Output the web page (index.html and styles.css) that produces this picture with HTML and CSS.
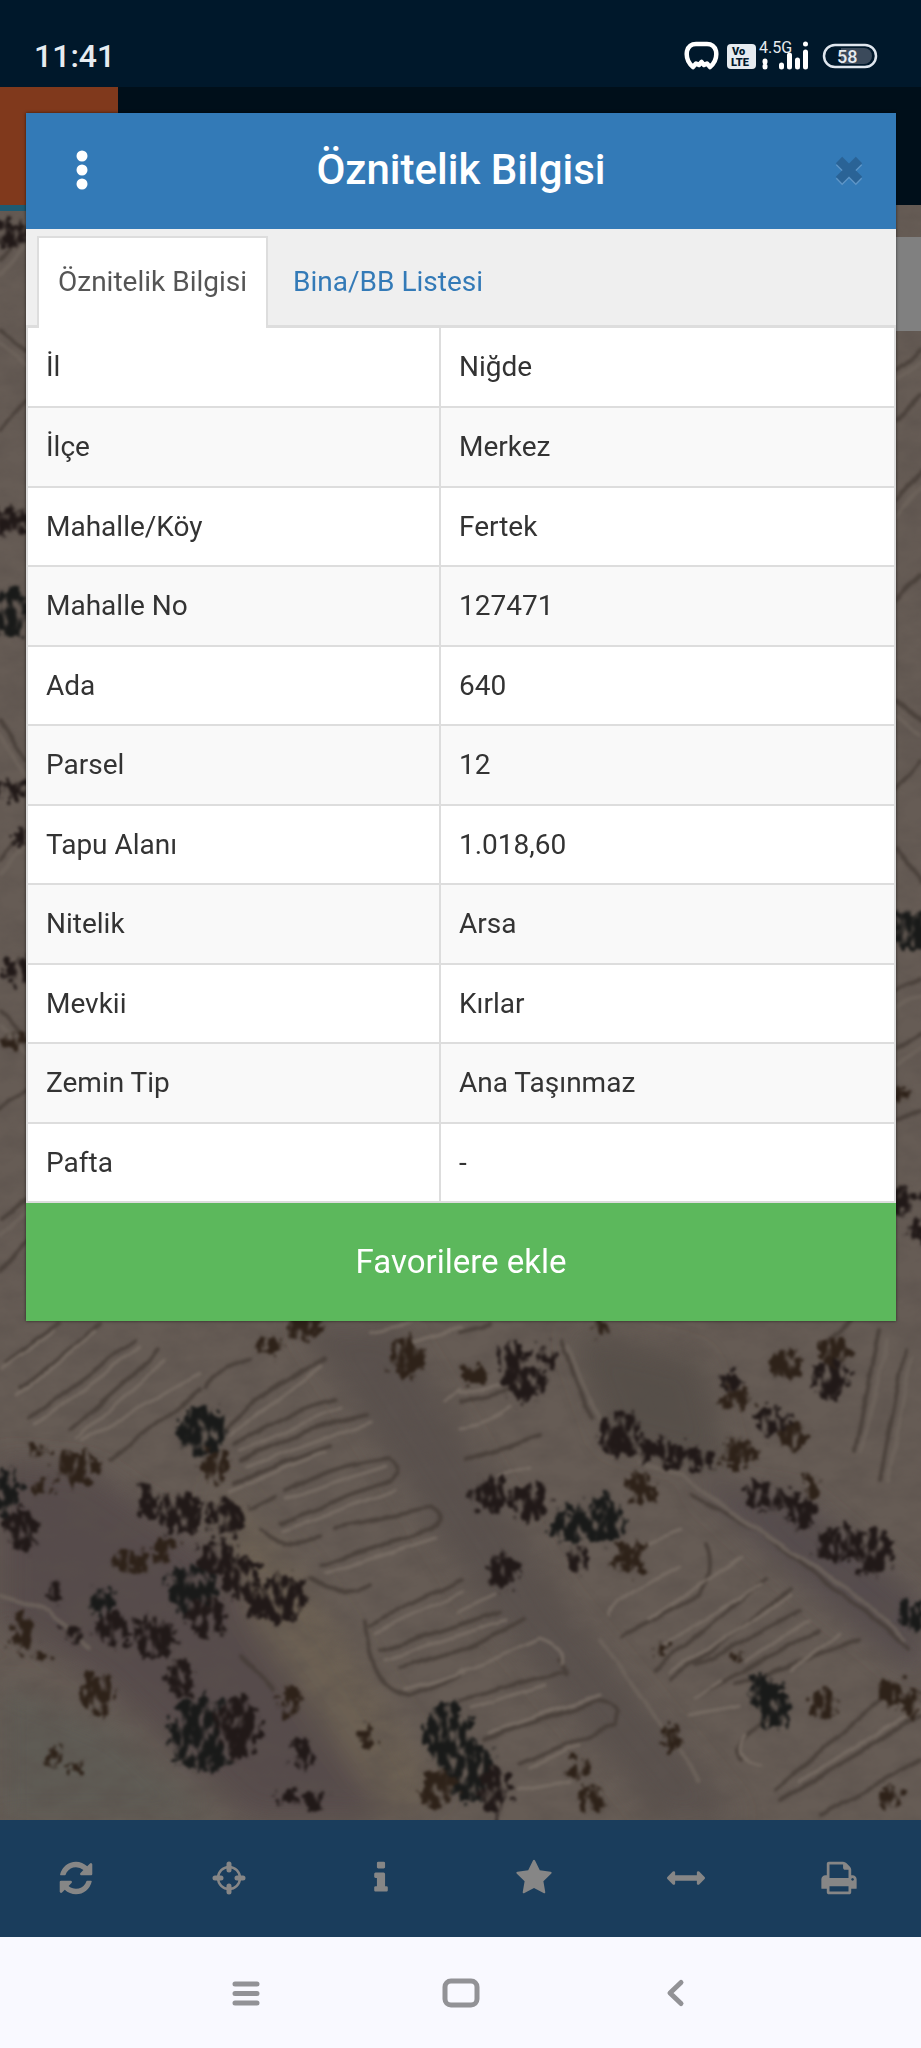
FILE: index.html
```html
<!DOCTYPE html>
<html lang="tr">
<head>
    <meta charset="UTF-8">
    <meta name="viewport" content="width=device-width, initial-scale=1.0">
    <title>Öznitelik Bilgisi</title>
    <link rel="stylesheet" href="styles.css">
</head>
<body>
    <div class="screen">
        <div class="status-bar">
            <span class="clock">11:41</span>
            <svg class="status-icons" viewBox="0 0 200 40" width="200" height="40">
                <!-- headset -->
                <path d="M10 31C4 26 3 21 4 15Q6 8 13 8H24Q31 8 33 15C34 21 33 26 27 31L24 27.500L21 29L18.500 26L16 29L13 27.500Z" fill="none" stroke="#fff" stroke-width="4.500" stroke-linejoin="round"/>
                <!-- volte -->
                <rect x="44" y="8" width="29" height="25" rx="4" fill="#e6ebf0"/>
                <text x="49" y="19" class="volte-text">Vo</text>
                <text x="48" y="30" class="volte-text">LTE</text>
                <!-- signal -->
                <text x="76" y="17" class="net-text">4.5G</text>
                <path d="M82 25v1M82 30v1" class="bar"/>
                <path d="M98.500 29v2M106.500 19v12M114.500 24v7M122.500 16v15M122.500 8v.1" class="bar"/>
                <!-- battery -->
                <path d="M158 12h23a8 8 0 0 1 0 16h-23z" fill="#3b4a5b"/>
                <rect x="141" y="9" width="52" height="22" rx="11" fill="none" stroke="#dfe6ee" stroke-width="2.500"/>
                <text x="154" y="27" class="battery-text">58</text>
            </svg>
        </div>

        <div class="app-header">
            <div class="logo"></div>
        </div>

        <main class="map">
            <svg class="map-image" viewBox="0 205 921 1615" preserveAspectRatio="xMidYMax slice">
                <defs>
                    <filter id="ground" x="0" y="0" width="100%" height="100%">
                        <feTurbulence type="fractalNoise" baseFrequency="0.03 0.05" numOctaves="4" seed="4"/>
                        <feColorMatrix values="0 0 0 0 0.1  0 0 0 0 0.08  0 0 0 0 0.07  1.6 0 0 0 -0.55"/>
                    </filter>
                    <filter id="rough" x="-5%" y="-5%" width="110%" height="110%" color-interpolation-filters="sRGB">
                        <feTurbulence type="fractalNoise" baseFrequency="0.1" numOctaves="3" seed="8" result="n"/>
                        <feDisplacementMap in="SourceGraphic" in2="n" scale="26" xChannelSelector="R" yChannelSelector="G" result="d"/>
                        <!-- holes in the foliage -->
                        <feTurbulence type="fractalNoise" baseFrequency="0.13 0.07" numOctaves="2" seed="3"/>
                        <feColorMatrix values="0 0 0 0 0  0 0 0 0 0  0 0 0 0 0  5 0 0 0 -1.5" result="holes"/>
                        <feComposite in="d" in2="holes" operator="in"/>
                        <feGaussianBlur stdDeviation="1.8"/>
                    </filter>
                    <filter id="wobble" x="-5%" y="-5%" width="110%" height="110%" color-interpolation-filters="sRGB">
                        <feTurbulence type="fractalNoise" baseFrequency="0.03" numOctaves="2" seed="2" result="n"/>
                        <feDisplacementMap in="SourceGraphic" in2="n" scale="8" xChannelSelector="R" yChannelSelector="G"/>
                        <feGaussianBlur stdDeviation="1.5"/>
                    </filter>
                    <filter id="soft" x="-20%" y="-20%" width="140%" height="140%">
                        <feGaussianBlur stdDeviation="14"/>
                    </filter>
                </defs>

                <rect y="205" width="921" height="1615" fill="#665c55"/>
                <g filter="url(#soft)">
                    <path d="M0 1460L90 1470 250 1580 420 1820H250L100 1680 0 1620z" fill="#564c4c"/>
                    <path d="M215 1480L300 1570 440 1790 390 1820 250 1620z" fill="#6c6053"/>
                    <path d="M0 1680L120 1730 220 1820H0z" fill="#5f5b54"/>
                    <path d="M300 1320L400 1330 560 1600 740 1820H660L480 1600z" fill="#5a514d"/>
                    <path d="M570 1330L700 1360 730 1470 610 1440z" fill="#57504a"/>
                    <path d="M690 1480L800 1500 921 1600V1680L800 1580z" fill="#554b4d"/>
                </g>
                <rect y="205" width="921" height="1615" filter="url(#ground)" opacity=".6"/>

                <!-- furrows -->
                <g filter="url(#wobble)" fill="none" stroke-width="4" stroke-linecap="round" opacity=".8">
                    <g stroke="#453c36">
                        <path d="M5 1362L60 1322M22 1388L100 1325M30 1418L135 1340M70 1430L160 1350M110 1460L200 1390"/>
                        <path d="M205 1388Q215 1368 250 1358M225 1428Q270 1385 325 1358M235 1445Q280 1415 335 1400M240 1462Q300 1430 365 1415M235 1482L330 1446M285 1492Q330 1465 390 1458Q405 1470 390 1480L280 1522M250 1510L275 1497M335 1528L430 1508Q450 1518 430 1530L320 1566M262 1530Q290 1555 320 1535M370 1625L460 1580M310 1580Q340 1600 370 1585M380 1650L500 1612M365 1620Q370 1690 410 1696L460 1675M400 1668L460 1650"/>
                        <path d="M460 1332L490 1325M460 1402L515 1388M465 1460L540 1435M460 1650L525 1620M460 1700L560 1672M485 1738L600 1700Q625 1705 615 1725L520 1765M560 1660Q570 1680 563 1672"/>
                        <path d="M622 1636L700 1595Q715 1570 705 1545M655 1670L765 1580M670 1680L790 1590M695 1665L800 1610M700 1695L820 1630M735 1685L860 1640M740 1760Q730 1740 770 1720M780 1800L921 1715M820 1815L921 1760M775 1790L880 1700"/>
                        <path d="M880 1330L855 1450M905 1350L880 1480M850 1320L820 1350M240 1655L275 1690M562 1340L590 1420M690 1495L760 1530 850 1600 910 1650"/>
                        <path d="M0 260L26 230M0 330L26 350M0 430L26 400M0 720L26 760M0 860L26 830M0 1010L26 1040M0 1110L26 1090M0 1220L26 1200M0 1270L26 1240M896 370L921 350M896 420L921 395M896 500L921 470M896 600L921 575M896 700L921 720M896 790L921 760M896 850L921 880M896 990L921 980M896 1050L921 1035M896 1120L921 1110"/>
                    </g>
                    <g stroke="#7c7168" stroke-width="3">
                        <path d="M2 1368L55 1330M18 1396L95 1332M35 1425L140 1347M75 1440L165 1360M80 1442L110 1425 200 1375"/>
                        <path d="M230 1435L320 1366M240 1452L340 1408M245 1468L370 1422M230 1490L325 1452M285 1500L385 1466M282 1530L395 1490M325 1574L435 1538M375 1633L461 1592M385 1660L505 1620M405 1690L465 1672M370 1332L420 1322M400 1345L461 1328M445 1400L461 1390"/>
                        <path d="M460 1428Q490 1425 512 1408M460 1394L500 1384M460 1612L495 1595M460 1672L540 1638Q570 1650 562 1664M470 1708L545 1685M490 1732L600 1695M530 1768L580 1745M520 1790L570 1780M500 1475L530 1468"/>
                        <path d="M610 1615Q615 1600 640 1588L680 1565M648 1620L742 1558M665 1645L700 1622 760 1585M670 1672L790 1596M745 1663L810 1620M790 1670L840 1635M695 1698L720 1682M690 1715L740 1705M640 1545L682 1530M745 1735Q730 1760 760 1765M800 1780L921 1708"/>
                    </g>
                    <g stroke="#6f655d">
                        <path d="M887 1340L862 1450M912 1360L888 1480M568 1345L600 1425M640 1462L680 1475 715 1500 850 1590 905 1640M600 1640L700 1780M0 1595L50 1610 90 1650"/>
                        <path d="M0 275L26 245M0 345L26 365M0 735L26 775M0 875L26 845M0 1025L26 1055M0 1235L26 1212M896 380L921 362M896 515L921 485M896 715L921 735M896 1005L921 995M896 1065L921 1050"/>
                    </g>
                </g>

                <!-- trees and bushes -->
                <g filter="url(#rough)">
                    <g fill="#191a19">
                        <ellipse cx="202" cy="1430" rx="24" ry="26"/>
                        <ellipse cx="6" cy="1492" rx="12" ry="25"/>
                        <ellipse cx="192" cy="1592" rx="24" ry="27"/>
                        <ellipse cx="204" cy="1734" rx="36" ry="38"/>
                        <ellipse cx="448" cy="1735" rx="24" ry="32"/>
                        <ellipse cx="472" cy="1772" rx="24" ry="32"/>
                        <ellipse cx="575" cy="1525" rx="26" ry="18"/>
                        <ellipse cx="604" cy="1520" rx="22" ry="24"/>
                        <ellipse cx="770" cy="1702" rx="17" ry="31" transform="rotate(-30 770 1702)"/>
                        <ellipse cx="8" cy="612" rx="22" ry="24"/>
                        <ellipse cx="912" cy="930" rx="20" ry="20"/>
                        <ellipse cx="103" cy="1602" rx="12" ry="15"/>
                        <ellipse cx="914" cy="1616" rx="17" ry="15"/>
                    </g>
                    <g fill="#211918">
                        <ellipse cx="22" cy="1530" rx="16" ry="21"/>
                        <ellipse cx="148" cy="1503" rx="9" ry="18"/>
                        <ellipse cx="182" cy="1513" rx="24" ry="20"/>
                        <ellipse cx="226" cy="1518" rx="19" ry="19"/>
                        <ellipse cx="207" cy="1618" rx="19" ry="20"/>
                        <ellipse cx="218" cy="1558" rx="20" ry="16"/>
                        <ellipse cx="243" cy="1580" rx="18" ry="22"/>
                        <ellipse cx="257" cy="1606" rx="10" ry="13"/>
                        <ellipse cx="283" cy="1599" rx="23" ry="26"/>
                        <ellipse cx="112" cy="1628" rx="15" ry="16"/>
                        <ellipse cx="55" cy="1593" rx="9" ry="10"/>
                        <ellipse cx="73" cy="1634" rx="12" ry="10"/>
                        <ellipse cx="153" cy="1637" rx="23" ry="21"/>
                        <ellipse cx="181" cy="1678" rx="14" ry="19"/>
                        <ellipse cx="238" cy="1728" rx="22" ry="33"/>
                        <ellipse cx="302" cy="1752" rx="10" ry="18"/>
                        <ellipse cx="289" cy="1798" rx="11" ry="10"/>
                        <ellipse cx="315" cy="1803" rx="9" ry="11"/>
                        <ellipse cx="495" cy="1790" rx="15" ry="25"/>
                        <ellipse cx="512" cy="1360" rx="16" ry="19"/>
                        <ellipse cx="526" cy="1382" rx="19" ry="19"/>
                        <ellipse cx="548" cy="1355" rx="9" ry="16"/>
                        <ellipse cx="620" cy="1434" rx="20" ry="22"/>
                        <ellipse cx="672" cy="1455" rx="44" ry="13" transform="rotate(12 672 1455)"/>
                        <ellipse cx="831" cy="1380" rx="18" ry="19"/>
                        <ellipse cx="773" cy="1422" rx="16" ry="15"/>
                        <ellipse cx="490" cy="1494" rx="20" ry="18"/>
                        <ellipse cx="530" cy="1502" rx="19" ry="20"/>
                        <ellipse cx="578" cy="1560" rx="11" ry="13"/>
                        <ellipse cx="503" cy="1571" rx="16" ry="17"/>
                        <ellipse cx="770" cy="1497" rx="30" ry="13" transform="rotate(14 770 1497)"/>
                        <ellipse cx="803" cy="1515" rx="14" ry="15"/>
                        <ellipse cx="838" cy="1544" rx="25" ry="17"/>
                        <ellipse cx="870" cy="1551" rx="22" ry="24"/>
                        <ellipse cx="730" cy="1381" rx="10" ry="9"/>
                        <ellipse cx="10" cy="522" rx="18" ry="15"/>
                        <ellipse cx="12" cy="790" rx="16" ry="10"/>
                        <ellipse cx="24" cy="838" rx="10" ry="10"/>
                        <ellipse cx="18" cy="970" rx="13" ry="15"/>
                        <ellipse cx="10" cy="232" rx="16" ry="14"/>
                        <ellipse cx="903" cy="1200" rx="17" ry="12"/>
                        <ellipse cx="918" cy="1230" rx="13" ry="10"/>
                    </g>
                    <g fill="#2e2219">
                        <ellipse cx="215" cy="1467" rx="14" ry="18"/>
                        <ellipse cx="77" cy="1468" rx="24" ry="17"/>
                        <ellipse cx="38" cy="1450" rx="8" ry="8"/>
                        <ellipse cx="41" cy="1486" rx="8" ry="7"/>
                        <ellipse cx="163" cy="1548" rx="11" ry="14"/>
                        <ellipse cx="133" cy="1562" rx="20" ry="12"/>
                        <ellipse cx="22" cy="1633" rx="13" ry="19"/>
                        <ellipse cx="98" cy="1694" rx="18" ry="21"/>
                        <ellipse cx="44" cy="1657" rx="6" ry="6"/>
                        <ellipse cx="291" cy="1701" rx="11" ry="16"/>
                        <ellipse cx="368" cy="1738" rx="9" ry="12"/>
                        <ellipse cx="53" cy="1756" rx="11" ry="8"/>
                        <ellipse cx="75" cy="1768" rx="7" ry="6"/>
                        <ellipse cx="439" cy="1789" rx="18" ry="19"/>
                        <ellipse cx="406" cy="1357" rx="16" ry="21"/>
                        <ellipse cx="305" cy="1327" rx="20" ry="12"/>
                        <ellipse cx="270" cy="1345" rx="15" ry="9"/>
                        <ellipse cx="474" cy="1374" rx="12" ry="10"/>
                        <ellipse cx="600" cy="1327" rx="9" ry="8"/>
                        <ellipse cx="738" cy="1454" rx="20" ry="15"/>
                        <ellipse cx="736" cy="1399" rx="17" ry="10"/>
                        <ellipse cx="786" cy="1364" rx="16" ry="16"/>
                        <ellipse cx="834" cy="1350" rx="16" ry="13"/>
                        <ellipse cx="794" cy="1436" rx="14" ry="14"/>
                        <ellipse cx="631" cy="1559" rx="17" ry="16"/>
                        <ellipse cx="641" cy="1490" rx="16" ry="15"/>
                        <ellipse cx="812" cy="1486" rx="8" ry="14"/>
                        <ellipse cx="823" cy="1703" rx="14" ry="16"/>
                        <ellipse cx="892" cy="1694" rx="14" ry="14"/>
                        <ellipse cx="911" cy="1704" rx="10" ry="14"/>
                        <ellipse cx="673" cy="1738" rx="9" ry="13"/>
                        <ellipse cx="580" cy="1768" rx="11" ry="12"/>
                        <ellipse cx="593" cy="1798" rx="15" ry="14"/>
                        <ellipse cx="889" cy="1798" rx="11" ry="11"/>
                        <ellipse cx="660" cy="1648" rx="6" ry="7"/>
                        <ellipse cx="737" cy="1656" rx="5" ry="6"/>
                        <ellipse cx="902" cy="1095" rx="9" ry="8"/>
                        <ellipse cx="12" cy="1040" rx="13" ry="6"/>
                    </g>
                </g>
            </svg>
            <div class="logo-line"></div>
            <div class="map-tool"></div>
        </main>

        <nav class="toolbar">
            <button aria-label="Yenile"><svg viewBox="0 0 1792 1792"><path d="M1639 1056q0 5-1 7-64 268-268 434.500t-478 166.500q-146 0-282.500-55t-243.500-157l-129 129q-19 19-45 19t-45-19-19-45v-448q0-26 19-45t45-19h448q26 0 45 19t19 45-19 45l-137 137q71 66 161 102t187 36q134 0 250-65t186-179q11-17 53-117 8-23 30-23h192q13 0 22.500 9.500t9.500 22.500zm25-800v448q0 26-19 45t-45 19h-448q-26 0-45-19t-19-45 19-45l138-138q-148-137-349-137-134 0-250 65t-186 179q-11 17-53 117-8 23-30 23h-199q-13 0-22.500-9.500t-9.500-22.500v-7q65-268 270-434.500t480-166.500q146 0 284 55.500t245 156.500l130-129q19-19 45-19t45 19 19 45z"/></svg></button>
            <button aria-label="Konum"><svg viewBox="0 0 38 38"><circle cx="19" cy="19" r="11" fill="none" stroke="#868686" stroke-width="2.500"/><path d="M19 5v6M19 27v6M5 19h6M27 19h6" stroke="#868686" stroke-width="5" stroke-linecap="round"/></svg></button>
            <button aria-label="Bilgi"><svg viewBox="0 0 1792 1792"><path d="M1216 1344v128q0 26-19 45t-45 19h-512q-26 0-45-19t-19-45v-128q0-26 19-45t45-19h64v-384h-64q-26 0-45-19t-19-45v-128q0-26 19-45t45-19h384q26 0 45 19t19 45v576h64q26 0 45 19t19 45zm-128-1152v192q0 26-19 45t-45 19h-256q-26 0-45-19t-19-45v-192q0-26 19-45t45-19h256q26 0 45 19t19 45z"/></svg></button>
            <button aria-label="Favoriler"><svg viewBox="0 0 1792 1792"><path d="M1728 647q0 22-26 48l-363 354 86 500q1 7 1 20 0 21-10.500 35.500t-30.500 14.500q-19 0-40-12l-449-236-449 236q-22 12-40 12-21 0-31.500-14.500t-10.500-35.500q0-6 2-20l86-500-364-354q-25-27-25-48 0-37 56-46l502-73 225-455q19-41 49-41t49 41l225 455 502 73q56 9 56 46z"/></svg></button>
            <button aria-label="Ölçüm"><svg viewBox="0 0 1792 1792"><path d="M1792 896q0 26-19 45l-256 256q-19 19-45 19t-45-19-19-45v-128h-1024v128q0 26-19 45t-45 19-45-19l-256-256q-19-19-19-45t19-45l256-256q19-19 45-19t45 19 19 45v128h1024v-128q0-26 19-45t45-19 45 19l256 256q19 19 19 45z"/></svg></button>
            <button aria-label="Yazdır"><svg viewBox="0 0 1792 1792"><path d="M448 1536h896v-256h-896v256zm0-640h896v-384h-160q-40 0-68-28t-28-68v-160h-640v640zm1152 64q0-26-19-45t-45-19-45 19-19 45 19 45 45 19 45-19 19-45zm128 0v416q0 13-9.500 22.500t-22.500 9.500h-224v160q0 40-28 68t-68 28h-960q-40 0-68-28t-28-68v-160h-224q-13 0-22.500-9.500t-9.500-22.500v-416q0-79 56.500-135.500t135.500-56.500h64v-544q0-40 28-68t68-28h672q40 0 88 20t76 48l152 152q28 28 48 76t20 88v256h64q79 0 135.500 56.500t56.500 135.500z"/></svg></button>
        </nav>

        <div class="system-nav">
            <button aria-label="Son uygulamalar"><svg viewBox="0 0 40 32" width="40" height="32"><path d="M9 7h22M9 16.500h22M9 26h22"/></svg></button>
            <button aria-label="Ana ekran"><svg viewBox="0 0 40 32" width="40" height="32"><rect x="4" y="4" width="32" height="24" rx="6"/></svg></button>
            <button aria-label="Geri"><svg viewBox="0 0 40 32" width="40" height="32"><path d="M25 5.500L14 16l11 10.500"/></svg></button>
        </div>

        <div class="modal" role="dialog" aria-labelledby="modalTitle">
            <div class="modal-header">
                <button class="menu-btn" aria-label="Menü"><svg viewBox="0 0 12 40" width="12" height="40"><circle cx="6" cy="6" r="5.500"/><circle cx="6" cy="20" r="5.500"/><circle cx="6" cy="34" r="5.500"/></svg></button>
                <h1 id="modalTitle">Öznitelik Bilgisi</h1>
                <button class="close-btn" aria-label="Kapat">
                    <svg viewBox="0 0 32 34" width="32" height="34">
                        <path d="M6 9L26 29M26 9L6 29" stroke="#5d95c7"/>
                        <path d="M6 7L26 27M26 7L6 27" stroke="#2a6396"/>
                    </svg>
                </button>
            </div>
            <div class="tabs">
                <a href="#" class="tab active">Öznitelik Bilgisi</a>
                <a href="#" class="tab">Bina/BB Listesi</a>
            </div>
            <table class="info-table">
                <tbody>
                    <tr><th scope="row">İl</th><td>Niğde</td></tr>
                    <tr><th scope="row">İlçe</th><td>Merkez</td></tr>
                    <tr><th scope="row">Mahalle/Köy</th><td>Fertek</td></tr>
                    <tr><th scope="row">Mahalle No</th><td>127471</td></tr>
                    <tr><th scope="row">Ada</th><td>640</td></tr>
                    <tr><th scope="row">Parsel</th><td>12</td></tr>
                    <tr><th scope="row">Tapu Alanı</th><td>1.018,60</td></tr>
                    <tr><th scope="row">Nitelik</th><td>Arsa</td></tr>
                    <tr><th scope="row">Mevkii</th><td>Kırlar</td></tr>
                    <tr><th scope="row">Zemin Tip</th><td>Ana Taşınmaz</td></tr>
                    <tr><th scope="row">Pafta</th><td>-</td></tr>
                </tbody>
            </table>
            <button class="btn-success">Favorilere ekle</button>
        </div>
    </div>
</body>
</html>
```
FILE: styles.css
```css
* {
    box-sizing: border-box;
}

body {
    margin: 0;
    font-family: Roboto, "Liberation Sans", sans-serif;
    font-size: 28px;
    line-height: 40px;
    color: #333;
}

button {
    font-family: inherit;
    border: none;
    background: none;
    padding: 0;
    cursor: pointer;
}

svg {
    display: block;
}

.screen {
    position: relative;
    display: flex;
    flex-direction: column;
    min-height: 100vh;
}

/* status bar */
.status-bar {
    display: flex;
    justify-content: space-between;
    align-items: center;
    height: 87px;
    padding: 24px 38px 0 34px;
    background-color: #00182b;
}

.clock {
    font-size: 32px;
    font-weight: 500;
    color: #e6ebf0;
}

.volte-text {
    font-size: 11px;
    font-weight: 900;
    fill: #00182b;
}

.net-text {
    font-size: 16px;
    fill: #e6ebf0;
}

.battery-text {
    font-size: 18px;
    font-weight: 500;
    fill: #e6ebf0;
}

.bar {
    fill: none;
    stroke: #fff;
    stroke-width: 5;
    stroke-linecap: round;
}

/* page behind the dialog */
.app-header {
    height: 118px;
    background-color: #000f1a;
}

.logo {
    width: 118px;
    height: 100%;
    background-color: #80391c;
}

.map {
    position: relative;
    flex: 1;
    overflow: hidden;
    background-color: #635952;
}

.map-image {
    position: absolute;
    width: 100%;
    height: 100%;
}

.logo-line {
    position: absolute;
    width: 118px;
    height: 6px;
    background-color: #1d5a72;
}

.map-tool {
    position: absolute;
    top: 32px;
    right: 0;
    width: 90px;
    height: 94px;
    background-color: #808080;
}

.toolbar {
    display: flex;
    height: 117px;
    padding: 0 6px 2px 0;
    background-color: #1a3d5c;
}

.toolbar button {
    flex: 1;
    display: flex;
    justify-content: center;
    align-items: center;
}

.toolbar svg {
    width: 38px;
    height: 38px;
    fill: #868686;
}

.system-nav {
    display: flex;
    justify-content: center;
    height: 111px;
    background-color: #f9f9ff;
}

.system-nav button {
    display: flex;
    justify-content: center;
    align-items: center;
    width: 215px;
}

.system-nav svg {
    fill: none;
    stroke: #929296;
    stroke-width: 5;
    stroke-linecap: round;
    stroke-linejoin: round;
}

/* dialog */
.modal {
    position: absolute;
    top: 113px;
    left: 26px;
    right: 25px;
    background-color: #fff;
    box-shadow: 0 0 3px rgba(0, 0, 0, 0.6);
}

.modal-header {
    display: flex;
    align-items: center;
    height: 116px;
    padding: 0 22px 2px 31px;
    background-color: #337ab7;
}

.modal-header button {
    display: flex;
    justify-content: center;
    width: 50px;
}

.modal-header h1 {
    flex: 1;
    margin: 0;
    padding-right: 9px;
    text-align: center;
    font-size: 42px;
    font-weight: 500;
    color: #fff;
}

.menu-btn svg {
    fill: #fff;
}

.close-btn svg {
    fill: none;
    stroke-width: 9;
}

.tabs {
    display: flex;
    padding: 7px 11px 0;
    background-color: #efefef;
    border-bottom: 3px solid #ddd;
}

.tab {
    margin-right: 4px;
    margin-bottom: -3px;
    padding: 24px 19px 26px;
    border: 2px solid transparent;
    border-bottom: none;
    color: #337ab7;
    text-decoration: none;
}

.tab.active {
    background-color: #fff;
    border-color: #ddd;
    color: #555;
}

.info-table {
    width: 100%;
    border-collapse: collapse;
}

.info-table th,
.info-table td {
    height: 79px;
    padding: 0 18px;
    border: 2px solid #ddd;
    border-top: none;
    font-weight: 400;
    text-align: left;
}

.info-table th {
    width: 413px;
}

.info-table tr:nth-child(even) {
    height: 80px;
    background-color: #f9f9f9;
}

.btn-success {
    display: block;
    width: 100%;
    height: 118px;
    padding-bottom: 2px;
    background-color: #5cb85c;
    color: #fff;
    font-size: 33px;
}
```
